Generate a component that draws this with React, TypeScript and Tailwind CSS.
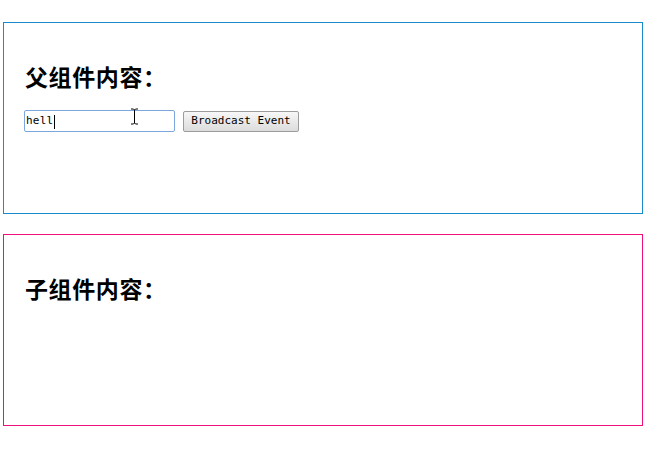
import React from "react";

// Parent / child panels — broadcast demo

const cjk = { fontFamily: '"Noto Sans CJK SC", "Noto Sans", sans-serif' };
const mono = { fontFamily: '"DejaVu Sans Mono", "Liberation Mono", monospace' };

function Panel({ title, color, children }: { title: string; color: string; children?: React.ReactNode }) {
  return (
    <div className={`relative w-[640px] h-[192px] border ${color} px-[20px] pt-[41px]`}>
      <h3 style={cjk} className="ml-[1px] text-[23px] leading-[24px] tracking-[0.6px] font-bold text-black">
        {title}
      </h3>
      {children}
    </div>
  );
}

export default function App() {
  return (
    <div className="w-[647px] h-[449px] bg-white pt-[22px] pl-[3px] overflow-hidden">
      <Panel title="父组件内容：" color="border-[#1a8cce]">
        <div className="flex items-center gap-[8px] mt-[22px]">
          <div
            style={mono}
            className="w-[151px] h-[22px] border border-[#7ba7de] rounded-[2px] bg-white flex items-center pl-px pt-px text-[11px] tracking-[0.2px] text-black"
          >
            <span>hell</span>
            <span className="w-px h-[14px] bg-black ml-px" />
          </div>
          <button
            style={mono}
            className="w-[116px] h-[21px] border border-[#9c9c9c] rounded-[2px] bg-gradient-to-b from-[#f7f7f7] to-[#dcdcdc] text-[11px] text-black flex items-center justify-center"
          >
            Broadcast Event
          </button>
        </div>
        {/* mouse I-beam cursor */}
        <svg className="absolute left-[126px] top-[85px]" width="9" height="17" viewBox="0 0 9 17">
          <path d="M1 1h2.5L4.5 2 5.5 1H8M4.5 2v13M1 16h2.5l1-1 1 1H8" fill="none" stroke="#000" strokeWidth="1" />
        </svg>
      </Panel>
      <div className="mt-[20px]">
        <Panel title="子组件内容：" color="border-[#f0107c]" />
      </div>
    </div>
  );
}
